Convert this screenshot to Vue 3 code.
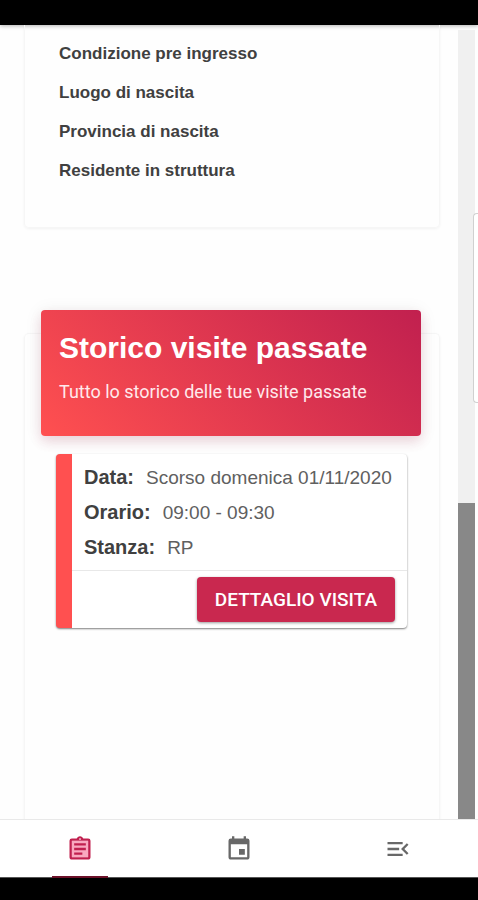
<script setup>
const fields = [
  'Condizione pre ingresso',
  'Luogo di nascita',
  'Provincia di nascita',
  'Residente in struttura',
]

const visit = [
  { label: 'Data:', value: 'Scorso domenica 01/11/2020' },
  { label: 'Orario:', value: '09:00 - 09:30' },
  { label: 'Stanza:', value: 'RP' },
]
</script>

<template>
  <div class="screen">
    <div class="system-bar top"></div>

    <div class="viewport">
      <main class="content">
        <section class="card details">
          <p v-for="field in fields" :key="field" class="field">{{ field }}</p>
        </section>

        <section class="card history">
          <header class="banner">
            <h2 class="banner-title">Storico visite passate</h2>
            <p class="banner-text">Tutto lo storico delle tue visite passate</p>
          </header>

          <article class="visit">
            <dl class="visit-info">
              <div v-for="row in visit" :key="row.label" class="row">
                <dt>{{ row.label }}</dt>
                <dd>{{ row.value }}</dd>
              </div>
            </dl>
            <div class="actions">
              <button type="button" class="action">DETTAGLIO VISITA</button>
            </div>
          </article>
        </section>
      </main>

      <div class="scroll-track" aria-hidden="true">
        <div class="scroll-thumb"></div>
      </div>
      <div class="edge" aria-hidden="true">
        <div class="edge-handle"></div>
      </div>
    </div>

    <nav class="tabs">
      <a href="#" class="tab active" aria-label="Scheda">
        <svg viewBox="0 0 24 24" width="28" height="28">
          <path d="M5 5h14v14H5z" fill="#f9a9c0" />
          <path
            fill="currentColor"
            d="M19 3h-4.18C14.4 1.84 13.3 1 12 1s-2.4.84-2.82 2H5a2 2 0 0 0-2 2v14c0 1.1.9 2 2 2h14c1.1 0 2-.9 2-2V5a2 2 0 0 0-2-2zm-7-.25c.41 0 .75.34.75.75s-.34.75-.75.75-.75-.34-.75-.75.34-.75.75-.75zM19 19H5V5h14v14zM7 7h10v2H7zm0 4h10v2H7zm0 4h7v2H7z"
          />
        </svg>
      </a>
      <a href="#" class="tab" aria-label="Calendario">
        <svg viewBox="0 0 24 24" width="28" height="28">
          <path
            fill="currentColor"
            d="M19 3h-1V1h-2v2H8V1H6v2H5a2 2 0 0 0-2 2v14c0 1.1.9 2 2 2h14c1.1 0 2-.9 2-2V5a2 2 0 0 0-2-2zm0 16H5V8h14v11zM12 12h5v5h-5z"
          />
        </svg>
      </a>
      <a href="#" class="tab" aria-label="Menu">
        <svg viewBox="0 0 24 24" width="28" height="28">
          <path
            fill="currentColor"
            d="M3 18h13v-2H3v2zm0-5h10v-2H3v2zm0-7v2h13V6H3zm18 9.59L17.42 12 21 8.41 19.59 7l-5 5 5 5L21 15.59z"
          />
        </svg>
      </a>
    </nav>

    <div class="system-bar bottom"></div>
  </div>
</template>

<style>
body {
  margin: 0;
  background: #fff;
}
</style>

<style scoped>
.screen {
  display: flex;
  flex-direction: column;
  min-height: 100vh;
  box-sizing: border-box;
  background: #fefefe;
  color: #404040;
  font-family: "Liberation Sans", Arial, sans-serif;
}

.system-bar {
  background: #000;
}

.top {
  height: 25px;
  box-shadow: 0 1px 4px rgba(0, 0, 0, 0.3);
}

.bottom {
  height: 22px;
  border-top: 1px solid #555;
}

.viewport {
  display: flex;
  flex: 1;
}

.content {
  display: flex;
  flex: 1;
  flex-direction: column;
  padding: 0 18px 0 24px;
}

.card {
  border: 1px solid #f6f6f6;
  box-shadow: 0 1px 3px rgba(0, 0, 0, 0.05);
}

.details {
  padding: 9px 34px 37px;
  border-top: 0;
  border-radius: 0 0 5px 5px;
}

.field {
  margin: 0;
  font-size: 17px;
  font-weight: 700;
  line-height: 39px;
}

.history {
  flex: 1;
  margin-top: 105px;
  padding: 0 18px 0 16px;
  border-bottom: 0;
  border-radius: 5px 5px 0 0;
}

.banner {
  margin-top: -24px;
  padding: 16px 18px 29px;
  border-radius: 4px;
  background: linear-gradient(45deg, #ff5050, #c1204f);
  box-shadow: 0 6px 12px rgba(193, 32, 79, 0.14), 0 2px 18px rgba(0, 0, 0, 0.08);
  color: #fff;
}

.banner-title {
  margin: 0;
  font-size: 30px;
  font-weight: 700;
  line-height: 44px;
}

.banner-text {
  margin: 7px 0 0;
  font-family: Roboto, sans-serif;
  font-size: 18px;
  line-height: 30px;
  color: #ffe9ec;
}

.visit {
  margin: 18px 14px 0 15px;
  border-left: 16px solid #ff5050;
  border-radius: 4px;
  background: #fff;
  box-shadow: 0 1px 2px rgba(0, 0, 0, 0.5);
}

.visit-info {
  margin: 0;
  padding: 6px 12px 5px;
}

.row {
  display: flex;
  align-items: baseline;
  gap: 12px;
  line-height: 35px;
}

.row dt {
  font-size: 20px;
  font-weight: 700;
}

.row dd {
  margin: 0;
  font-size: 19px;
  color: #606060;
  white-space: nowrap;
}

.actions {
  display: flex;
  justify-content: flex-end;
  padding: 6px 12px;
  border-top: 1px solid #e8e8e8;
}

.action {
  height: 45px;
  padding: 0 18px;
  border: 0;
  border-radius: 4px;
  background: #c9284f;
  box-shadow: 0 1px 3px rgba(0, 0, 0, 0.4);
  color: #fff;
  font-family: Roboto, sans-serif;
  font-size: 19px;
  font-weight: 500;
}

.scroll-track {
  display: flex;
  flex-direction: column;
  justify-content: flex-end;
  width: 17px;
  margin-top: 5px;
  background: #f0f0f0;
}

.scroll-thumb {
  height: 40%;
  background: #888;
}

.edge {
  position: relative;
  width: 3px;
}

.edge-handle {
  position: absolute;
  top: 188px;
  right: 0;
  width: 4px;
  height: 188px;
  border: 1px solid #d0d0d0;
  border-right: 0;
  border-radius: 4px 0 0 4px;
  background: #fff;
}

.tabs {
  display: grid;
  grid-template-columns: repeat(3, 1fr);
  height: 57px;
  border-top: 1px solid #e9e9e9;
  background: #fff;
}

.tab {
  display: flex;
  position: relative;
  align-items: center;
  justify-content: center;
  color: #686868;
}

.tab.active {
  color: #c1204f;
}

.tab.active::after {
  content: "";
  position: absolute;
  bottom: -1px;
  width: 56px;
  height: 2px;
  background: #6b1028;
}
</style>
